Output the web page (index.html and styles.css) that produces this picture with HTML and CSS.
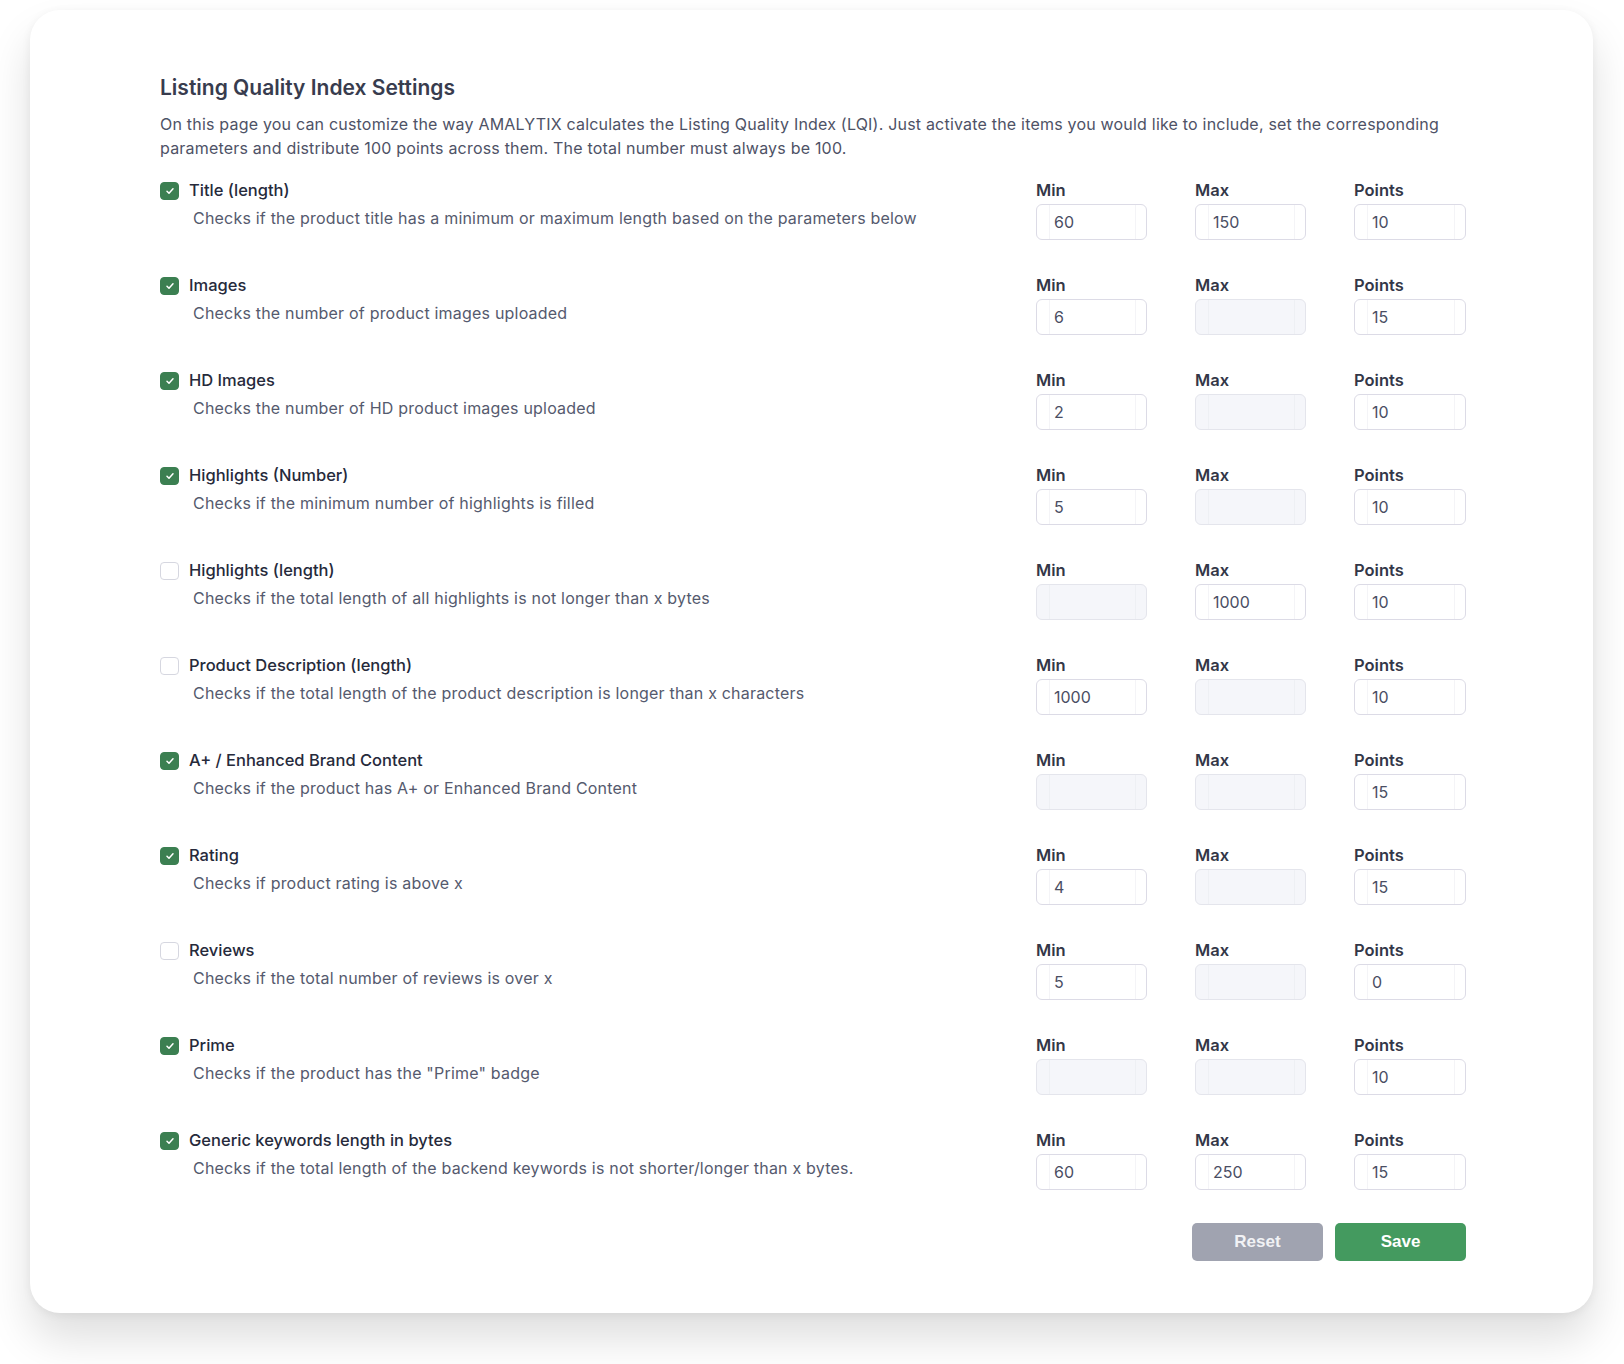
FILE: index.html
```html
<!DOCTYPE html>
<html lang="en">
<head>
<meta charset="utf-8">
<title>Listing Quality Index Settings</title>
<link rel="stylesheet" href="styles.css">
</head>
<body>
<div class="card">
  <h1 class="title">Listing Quality Index Settings</h1>
  <p class="intro">On this page you can customize the way AMALYTIX calculates the Listing Quality Index (LQI). Just activate the items you would like to include, set the corresponding parameters and distribute 100 points across them. The total number must always be 100.</p>

  <div class="rows">
    <div class="row">
      <div class="info">
        <div class="head"><span class="cb on"><svg viewBox="0 0 12 12"><path d="M3 6.2l2 2 4-4.4"/></svg></span><span class="name">Title (length)</span></div>
        <div class="desc">Checks if the product title has a minimum or maximum length based on the parameters below</div>
      </div>
      <div class="fields">
        <label class="field"><span class="flabel">Min</span><span class="input">60</span></label>
        <label class="field"><span class="flabel">Max</span><span class="input">150</span></label>
        <label class="field"><span class="flabel">Points</span><span class="input">10</span></label>
      </div>
    </div>

    <div class="row">
      <div class="info">
        <div class="head"><span class="cb on"><svg viewBox="0 0 12 12"><path d="M3 6.2l2 2 4-4.4"/></svg></span><span class="name">Images</span></div>
        <div class="desc">Checks the number of product images uploaded</div>
      </div>
      <div class="fields">
        <label class="field"><span class="flabel">Min</span><span class="input">6</span></label>
        <label class="field"><span class="flabel">Max</span><span class="input disabled"></span></label>
        <label class="field"><span class="flabel">Points</span><span class="input">15</span></label>
      </div>
    </div>

    <div class="row">
      <div class="info">
        <div class="head"><span class="cb on"><svg viewBox="0 0 12 12"><path d="M3 6.2l2 2 4-4.4"/></svg></span><span class="name">HD Images</span></div>
        <div class="desc">Checks the number of HD product images uploaded</div>
      </div>
      <div class="fields">
        <label class="field"><span class="flabel">Min</span><span class="input">2</span></label>
        <label class="field"><span class="flabel">Max</span><span class="input disabled"></span></label>
        <label class="field"><span class="flabel">Points</span><span class="input">10</span></label>
      </div>
    </div>

    <div class="row">
      <div class="info">
        <div class="head"><span class="cb on"><svg viewBox="0 0 12 12"><path d="M3 6.2l2 2 4-4.4"/></svg></span><span class="name">Highlights (Number)</span></div>
        <div class="desc">Checks if the minimum number of highlights is filled</div>
      </div>
      <div class="fields">
        <label class="field"><span class="flabel">Min</span><span class="input">5</span></label>
        <label class="field"><span class="flabel">Max</span><span class="input disabled"></span></label>
        <label class="field"><span class="flabel">Points</span><span class="input">10</span></label>
      </div>
    </div>

    <div class="row">
      <div class="info">
        <div class="head"><span class="cb"></span><span class="name">Highlights (length)</span></div>
        <div class="desc">Checks if the total length of all highlights is not longer than x bytes</div>
      </div>
      <div class="fields">
        <label class="field"><span class="flabel">Min</span><span class="input disabled"></span></label>
        <label class="field"><span class="flabel">Max</span><span class="input">1000</span></label>
        <label class="field"><span class="flabel">Points</span><span class="input">10</span></label>
      </div>
    </div>

    <div class="row">
      <div class="info">
        <div class="head"><span class="cb"></span><span class="name">Product Description (length)</span></div>
        <div class="desc">Checks if the total length of the product description is longer than x characters</div>
      </div>
      <div class="fields">
        <label class="field"><span class="flabel">Min</span><span class="input">1000</span></label>
        <label class="field"><span class="flabel">Max</span><span class="input disabled"></span></label>
        <label class="field"><span class="flabel">Points</span><span class="input">10</span></label>
      </div>
    </div>

    <div class="row">
      <div class="info">
        <div class="head"><span class="cb on"><svg viewBox="0 0 12 12"><path d="M3 6.2l2 2 4-4.4"/></svg></span><span class="name">A+ / Enhanced Brand Content</span></div>
        <div class="desc">Checks if the product has A+ or Enhanced Brand Content</div>
      </div>
      <div class="fields">
        <label class="field"><span class="flabel">Min</span><span class="input disabled"></span></label>
        <label class="field"><span class="flabel">Max</span><span class="input disabled"></span></label>
        <label class="field"><span class="flabel">Points</span><span class="input">15</span></label>
      </div>
    </div>

    <div class="row">
      <div class="info">
        <div class="head"><span class="cb on"><svg viewBox="0 0 12 12"><path d="M3 6.2l2 2 4-4.4"/></svg></span><span class="name">Rating</span></div>
        <div class="desc">Checks if product rating is above x</div>
      </div>
      <div class="fields">
        <label class="field"><span class="flabel">Min</span><span class="input">4</span></label>
        <label class="field"><span class="flabel">Max</span><span class="input disabled"></span></label>
        <label class="field"><span class="flabel">Points</span><span class="input">15</span></label>
      </div>
    </div>

    <div class="row">
      <div class="info">
        <div class="head"><span class="cb"></span><span class="name">Reviews</span></div>
        <div class="desc">Checks if the total number of reviews is over x</div>
      </div>
      <div class="fields">
        <label class="field"><span class="flabel">Min</span><span class="input">5</span></label>
        <label class="field"><span class="flabel">Max</span><span class="input disabled"></span></label>
        <label class="field"><span class="flabel">Points</span><span class="input">0</span></label>
      </div>
    </div>

    <div class="row">
      <div class="info">
        <div class="head"><span class="cb on"><svg viewBox="0 0 12 12"><path d="M3 6.2l2 2 4-4.4"/></svg></span><span class="name">Prime</span></div>
        <div class="desc">Checks if the product has the "Prime" badge</div>
      </div>
      <div class="fields">
        <label class="field"><span class="flabel">Min</span><span class="input disabled"></span></label>
        <label class="field"><span class="flabel">Max</span><span class="input disabled"></span></label>
        <label class="field"><span class="flabel">Points</span><span class="input">10</span></label>
      </div>
    </div>

    <div class="row">
      <div class="info">
        <div class="head"><span class="cb on"><svg viewBox="0 0 12 12"><path d="M3 6.2l2 2 4-4.4"/></svg></span><span class="name">Generic keywords length in bytes</span></div>
        <div class="desc">Checks if the total length of the backend keywords is not shorter/longer than x bytes.</div>
      </div>
      <div class="fields">
        <label class="field"><span class="flabel">Min</span><span class="input">60</span></label>
        <label class="field"><span class="flabel">Max</span><span class="input">250</span></label>
        <label class="field"><span class="flabel">Points</span><span class="input">15</span></label>
      </div>
    </div>
  </div>

  <div class="actions">
    <button class="btn reset">Reset</button>
    <button class="btn save">Save</button>
  </div>
</div>
</body>
</html>
```

FILE: styles.css
```css
* { box-sizing: border-box; }

html, body {
  margin: 0;
  padding: 0;
  background: #ffffff;
}

body {
  font-family: Inter, "Noto Sans", "Liberation Sans", sans-serif;
  color: #2d3142;
  padding: 10px 31px 60px 30px;
}

.card {
  width: 1563px;
  height: 1303px;
  background: #ffffff;
  border-radius: 30px;
  box-shadow: 0 26px 44px rgba(0, 0, 0, 0.13), 0 2px 10px rgba(0, 0, 0, 0.06);
  padding: 64px 127px 0 130px;
}

.title {
  margin: 0;
  font-size: 21px;
  line-height: 28px;
  font-weight: 600;
  color: #383c4e;
}

.intro {
  margin: 10px 0 0;
  font-size: 16px;
  line-height: 24px;
  letter-spacing: 0.2px;
  color: #4e5266;
}

.rows {
  margin-top: 20px;
  display: flex;
  flex-direction: column;
  gap: 35px;
}

.row {
  display: flex;
  justify-content: space-between;
  height: 60px;
}

.head {
  display: flex;
  align-items: center;
  gap: 10px;
  height: 20px;
}

.cb {
  width: 19px;
  height: 18px;
  border-radius: 4px;
  border: 1px solid #d6d7e0;
  background: #ffffff;
  display: flex;
  align-items: center;
  justify-content: center;
  margin-top: 2px;
}

.cb.on {
  background: #3b7f51;
  border-color: #3b7f51;
}

.cb svg {
  width: 12px;
  height: 12px;
  fill: none;
  stroke: #ffffff;
  stroke-width: 1.5;
  stroke-linecap: round;
  stroke-linejoin: round;
}

.name {
  font-size: 16.5px;
  line-height: 20px;
  font-weight: 500;
  color: #262a3b;
}

.desc {
  margin: 8px 0 0 33px;
  font-size: 16px;
  line-height: 20px;
  letter-spacing: 0.2px;
  color: #555a6e;
}

.fields {
  display: grid;
  grid-template-columns: 111px 111px 112px;
  column-gap: 48px;
}

.field {
  display: flex;
  flex-direction: column;
  gap: 4px;
}

.flabel {
  font-size: 16.5px;
  line-height: 20px;
  font-weight: 600;
  color: #333748;
}

.input {
  display: block;
  height: 36px;
  border: 1px solid #dcdbe6;
  border-radius: 6px;
  padding: 0 0 0 17px;
  font-size: 16px;
  line-height: 34px;
  color: #4a4e63;
  background:
    linear-gradient(#f4f4f7, #f4f4f7) 12px 0 / 1px 100% no-repeat,
    linear-gradient(#f4f4f7, #f4f4f7) calc(100% - 10px) 0 / 1px 100% no-repeat,
    #ffffff;
}

.input.disabled {
  background:
    linear-gradient(#eef0f4, #eef0f4) 12px 0 / 1px 100% no-repeat,
    linear-gradient(#eef0f4, #eef0f4) calc(100% - 10px) 0 / 1px 100% no-repeat,
    #f5f6fa;
  border-color: #e4e5ec;
}

.actions {
  margin-top: 33px;
  display: flex;
  justify-content: flex-end;
  gap: 12px;
}

.btn {
  width: 131px;
  height: 38px;
  border: none;
  border-radius: 5px;
  font-family: "Liberation Sans", Arial, sans-serif;
  font-size: 17px;
  font-weight: 700;
  color: #ffffff;
}

.btn.reset {
  background: #a0a3b0;
  color: #f1f2f5;
}

.btn.save {
  background: #449a5f;
}
```
